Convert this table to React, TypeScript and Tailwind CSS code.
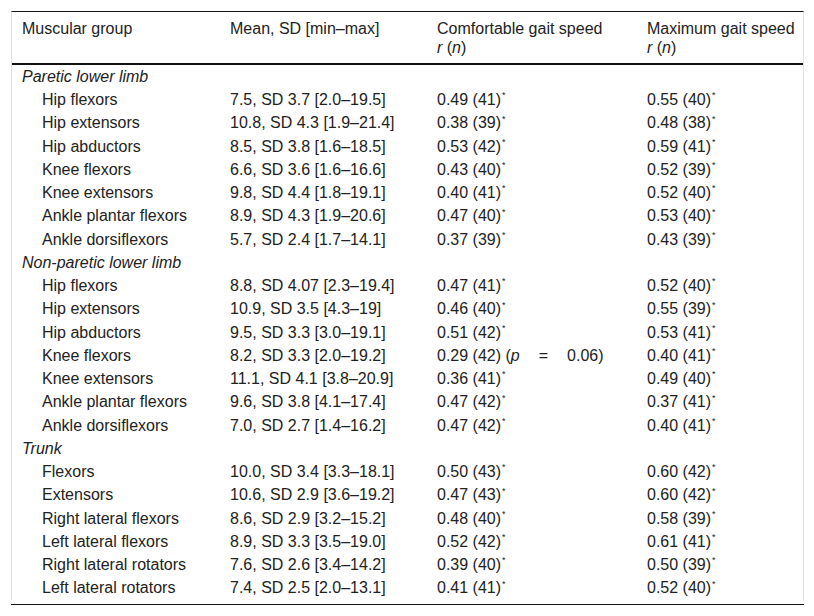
import React from "react";

type Row = { name: string; mean: string; comf: string; max: string; p?: boolean };

const sections: { title: string; rows: Row[] }[] = [
  {
    title: "Paretic lower limb",
    rows: [
      { name: "Hip flexors", mean: "7.5, SD 3.7 [2.0–19.5]", comf: "0.49 (41)", max: "0.55 (40)" },
      { name: "Hip extensors", mean: "10.8, SD 4.3 [1.9–21.4]", comf: "0.38 (39)", max: "0.48 (38)" },
      { name: "Hip abductors", mean: "8.5, SD 3.8 [1.6–18.5]", comf: "0.53 (42)", max: "0.59 (41)" },
      { name: "Knee flexors", mean: "6.6, SD 3.6 [1.6–16.6]", comf: "0.43 (40)", max: "0.52 (39)" },
      { name: "Knee extensors", mean: "9.8, SD 4.4 [1.8–19.1]", comf: "0.40 (41)", max: "0.52 (40)" },
      { name: "Ankle plantar flexors", mean: "8.9, SD 4.3 [1.9–20.6]", comf: "0.47 (40)", max: "0.53 (40)" },
      { name: "Ankle dorsiflexors", mean: "5.7, SD 2.4 [1.7–14.1]", comf: "0.37 (39)", max: "0.43 (39)" },
    ],
  },
  {
    title: "Non-paretic lower limb",
    rows: [
      { name: "Hip flexors", mean: "8.8, SD 4.07 [2.3–19.4]", comf: "0.47 (41)", max: "0.52 (40)" },
      { name: "Hip extensors", mean: "10.9, SD 3.5 [4.3–19]", comf: "0.46 (40)", max: "0.55 (39)" },
      { name: "Hip abductors", mean: "9.5, SD 3.3 [3.0–19.1]", comf: "0.51 (42)", max: "0.53 (41)" },
      { name: "Knee flexors", mean: "8.2, SD 3.3 [2.0–19.2]", comf: "0.29 (42)", max: "0.40 (41)", p: true },
      { name: "Knee extensors", mean: "11.1, SD 4.1 [3.8–20.9]", comf: "0.36 (41)", max: "0.49 (40)" },
      { name: "Ankle plantar flexors", mean: "9.6, SD 3.8 [4.1–17.4]", comf: "0.47 (42)", max: "0.37 (41)" },
      { name: "Ankle dorsiflexors", mean: "7.0, SD 2.7 [1.4–16.2]", comf: "0.47 (42)", max: "0.40 (41)" },
    ],
  },
  {
    title: "Trunk",
    rows: [
      { name: "Flexors", mean: "10.0, SD 3.4 [3.3–18.1]", comf: "0.50 (43)", max: "0.60 (42)" },
      { name: "Extensors", mean: "10.6, SD 2.9 [3.6–19.2]", comf: "0.47 (43)", max: "0.60 (42)" },
      { name: "Right lateral flexors", mean: "8.6, SD 2.9 [3.2–15.2]", comf: "0.48 (40)", max: "0.58 (39)" },
      { name: "Left lateral flexors", mean: "8.9, SD 3.3 [3.5–19.0]", comf: "0.52 (42)", max: "0.61 (41)" },
      { name: "Right lateral rotators", mean: "7.6, SD 2.6 [3.4–14.2]", comf: "0.39 (40)", max: "0.50 (39)" },
      { name: "Left lateral rotators", mean: "7.4, SD 2.5 [2.0–13.1]", comf: "0.41 (41)", max: "0.52 (40)" },
    ],
  },
];

const grid = "grid grid-cols-[208px_207px_210px_1fr]";
const cell = "pl-[10px] py-[2px] leading-[19.25px] whitespace-nowrap";

function Star() {
  return <sup className="text-[9px] relative top-[-0.75em] ml-[1px]">*</sup>;
}

export default function App() {
  return (
    <div className="bg-white min-h-screen pt-[11px] pl-[11px] pr-[10px] font-['Liberation_Sans',Arial,sans-serif] text-[16px] text-[#222]">
      <div className="border-t border-t-[#111] border-x border-x-[#e4e4e4]">
        {/* header */}
        <div className={`${grid} border-b-2 border-b-[#111] pt-[7px] pb-[5.5px] leading-[19.2px]`}>
          <div className="pl-[10px]">Muscular group</div>
          <div className="pl-[10px]">Mean, SD [min–max]</div>
          <div className="pl-[10px]">
            Comfortable gait speed
            <br />
            <i>r</i> (<i>n</i>)
          </div>
          <div className="pl-[10px]">
            Maximum gait speed
            <br />
            <i>r</i> (<i>n</i>)
          </div>
        </div>

        {/* body */}
        {sections.map((s) => (
          <div key={s.title}>
            <div className={grid}>
              <div className={`${cell} italic`}>{s.title}</div>
              <div className={cell} />
              <div className={cell} />
              <div className={cell} />
            </div>
            {s.rows.map((r) => (
              <div key={s.title + r.name} className={grid}>
                <div className={`${cell} pl-[30px]`}>{r.name}</div>
                <div className={cell}>{r.mean}</div>
                <div className={cell}>
                  {r.p ? (
                    <>
                      {r.comf} (<i>p</i>
                      <span className="mx-[19px]">=</span>0.06)
                    </>
                  ) : (
                    <>
                      {r.comf}
                      <Star />
                    </>
                  )}
                </div>
                <div className={cell}>
                  {r.max}
                  <Star />
                </div>
              </div>
            ))}
          </div>
        ))}
      </div>
      <div className="mt-[4px] border-t border-t-[#111]" />
    </div>
  );
}
